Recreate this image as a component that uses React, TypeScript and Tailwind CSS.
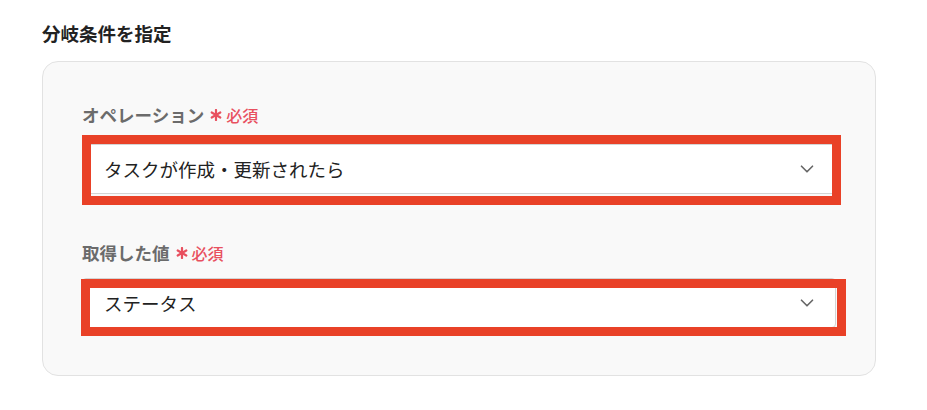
import { ChevronDown } from "lucide-react";

const font = { fontFamily: '"Noto Sans CJK JP", "Noto Sans", sans-serif' };

function Asterisk() {
    return (
        <svg viewBox="0 0 12 12" className="w-3 h-3 ml-1.5 mr-1" stroke="#e8505f" strokeWidth={2.2} strokeLinecap="round">
            <line x1="6" y1="1" x2="6" y2="11" />
            <line x1="1.7" y1="3.5" x2="10.3" y2="8.5" />
            <line x1="1.7" y1="8.5" x2="10.3" y2="3.5" />
        </svg>
    );
}

function Field({ label, value, labelClass, box }: { label: string; value: string; labelClass: string; box: string }) {
    return (
        <div>
            <div className={`flex items-center h-6 ${labelClass}`}>
                <span className="text-[17.5px] font-semibold text-[#6b6b6b] leading-6">{label}</span>
                <Asterisk />
                <span className="text-[#e8505f] text-[16px] font-medium leading-6">必須</span>
            </div>
            <div className="relative">
                <div className="h-[50px] bg-white border border-[#d4d4d4] rounded flex items-center pl-[21px] pr-[17px]">
                    <span className="flex-1 text-[18.5px] text-[#222] leading-none">{value}</span>
                    <ChevronDown className="w-[22px] h-[22px] text-[#666]" strokeWidth={1.8} />
                </div>
                {/* red annotation frame */}
                <div className={`absolute border-[9px] border-[#e94127] pointer-events-none ${box}`}></div>
            </div>
        </div>
    );
}

export default function App() {
    return (
        <div className="w-[927px] h-[410px] bg-white px-[42px] pt-[20px]" style={font}>
            <h2 className="text-[18.5px] font-bold text-[#222] leading-[26px]">分岐条件を指定</h2>
            <div className="mt-[15px] w-[834px] h-[315px] bg-[#f9f9f9] border border-[#e2e2e2] rounded-2xl px-[39px] pt-[41px]">
                <Field
                    label="オペレーション"
                    value="タスクが作成・更新されたら"
                    labelClass="mb-[17px]"
                    box="left-0 top-[-9px] right-[-5px] bottom-[-11px]"
                />
                <div className="mt-[47px]">
                    <Field
                        label="取得した値"
                        value="ステータス"
                        labelClass="mb-[13px]"
                        box="left-[-1px] top-[1px] right-[-10px] bottom-[-8px]"
                    />
                </div>
            </div>
        </div>
    );
}
